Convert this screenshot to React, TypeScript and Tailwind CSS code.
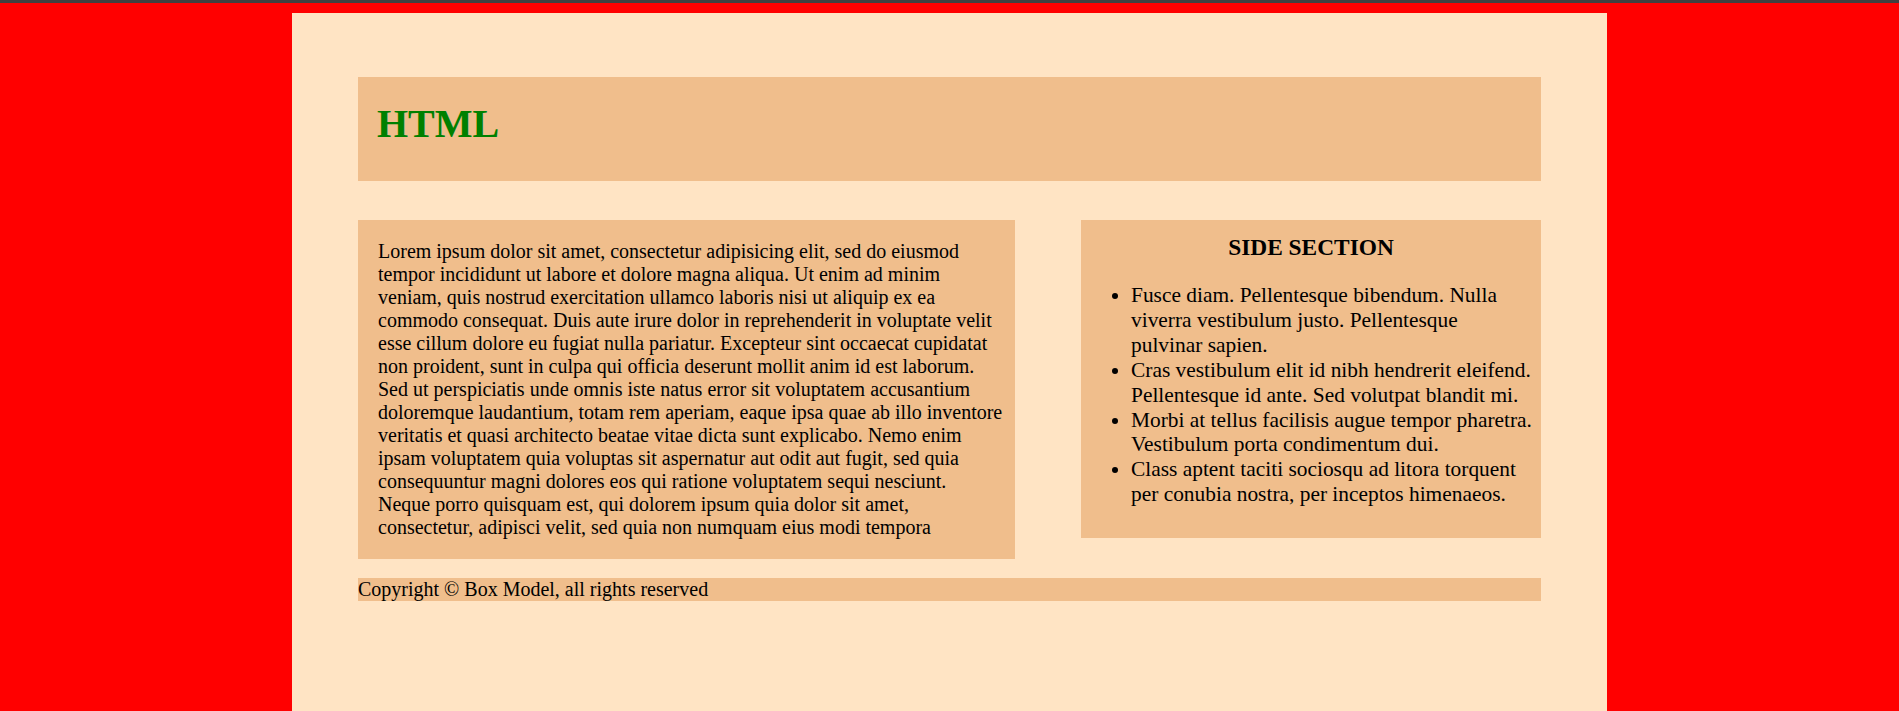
export default function App() {
  const serif = { fontFamily: '"Liberation Serif", "Times New Roman", serif' };
  return (
    <div
      className="min-h-screen bg-[#ff0000] border-t-[3px] border-[#404040] pt-[10px] text-black"
      style={serif}
    >
      <div className="w-[1315px] mx-auto bg-[#ffe4c4] px-[66px] pt-[64px] min-h-[698px]">
        <header className="bg-[#f0be8c] h-[104px] pl-[19px] pt-[24px]">
          <h1 className="text-[40px] font-bold text-[#008000] leading-[46px]">HTML</h1>
        </header>

        <div className="flex justify-between items-start mt-[39px]">
          <main className="w-[657px] bg-[#f0be8c] pl-[20px] pr-[10px] py-[20px] text-[20px] leading-[23px]">
            <p>
              Lorem ipsum dolor sit amet, consectetur adipisicing elit, sed do eiusmod tempor incididunt ut
              labore et dolore magna aliqua. Ut enim ad minim veniam, quis nostrud exercitation ullamco laboris
              nisi ut aliquip ex ea commodo consequat. Duis aute irure dolor in reprehenderit in voluptate velit
              esse cillum dolore eu fugiat nulla pariatur. Excepteur sint occaecat cupidatat non proident, sunt
              in culpa qui officia deserunt mollit anim id est laborum. Sed ut perspiciatis unde omnis iste natus
              error sit voluptatem accusantium doloremque laudantium, totam rem aperiam, eaque ipsa quae ab illo
              inventore veritatis et quasi architecto beatae vitae dicta sunt explicabo. Nemo enim ipsam
              voluptatem quia voluptas sit aspernatur aut odit aut fugit, sed quia consequuntur magni dolores eos
              qui ratione voluptatem sequi nesciunt.
              <br />
              Neque porro quisquam est, qui dolorem ipsum quia dolor sit amet, consectetur, adipisci velit, sed
              quia non numquam eius modi tempora
            </p>
          </main>

          <aside className="w-[460px] bg-[#f0be8c] pt-[14px] pb-[31px] pr-[8px]">
            <h3 className="text-center text-[23.4px] font-bold leading-[27px] pl-[8px]">SIDE SECTION</h3>
            <ul className="list-disc pl-[50px] mt-[22px] text-[21.4px] leading-[24.9px]">
              <li>Fusce diam. Pellentesque bibendum. Nulla viverra vestibulum justo. Pellentesque pulvinar sapien.</li>
              <li>Cras vestibulum elit id nibh hendrerit eleifend. Pellentesque id ante. Sed volutpat blandit mi.</li>
              <li>Morbi at tellus facilisis augue tempor pharetra. Vestibulum porta condimentum dui.</li>
              <li>Class aptent taciti sociosqu ad litora torquent per conubia nostra, per inceptos himenaeos.</li>
            </ul>
          </aside>
        </div>

        <footer className="mt-[19px] bg-[#f0be8c] h-[23px] text-[20px] leading-[23px]">
          Copyright © Box Model, all rights reserved
        </footer>
      </div>
    </div>
  );
}
